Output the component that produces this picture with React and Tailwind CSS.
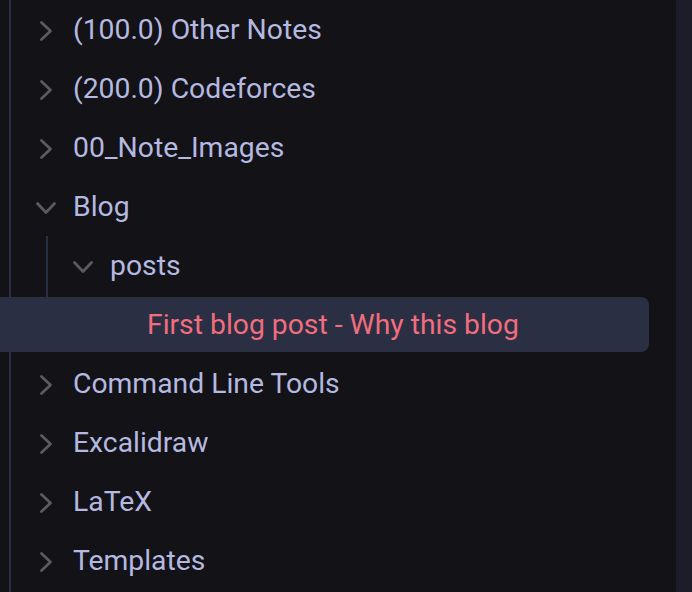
import React from "react";

const font = { fontFamily: "Roboto, 'Noto Sans', sans-serif" };

const ChevronRight = () => (
  <svg width="22" height="22" viewBox="0 0 22 22" fill="none" stroke="#5b5b5f" strokeWidth="2.8" strokeLinecap="round" strokeLinejoin="round">
    <path d="M6.5 2.5 L15.5 11 L6.5 19.5" />
  </svg>
);

const ChevronDown = () => (
  <svg width="22" height="22" viewBox="0 0 22 22" fill="none" stroke="#5b5b5f" strokeWidth="2.8" strokeLinecap="round" strokeLinejoin="round">
    <path d="M2.5 6.5 L11 15.5 L19.5 6.5" />
  </svg>
);

const Folder = ({ name, open }) => (
  <div className="flex h-[59px] items-center pl-[24px] pt-[2px]">
    <span className="flex w-[22px] shrink-0">{open ? <ChevronDown /> : <ChevronRight />}</span>
    <span className="ml-[16px] whitespace-nowrap text-[28.3px] leading-none text-[#b5b9e0]">{name}</span>
  </div>
);

export default function App() {
  return (
    <div className="flex h-[592px] w-[692px] overflow-hidden bg-[#121217]" style={font}>
      <div className="w-[676px] shrink-0 overflow-hidden">
        <div className="ml-[9px] h-full border-l-2 border-[#2b2f45]">
          <Folder name="(100.0) Other Notes" />
          <Folder name="(200.0) Codeforces" />
          <Folder name="00_Note_Images" />
          <Folder name="Blog" open />
          <div className="ml-[35px] border-l-2 border-[#2b2f45]">
            <Folder name="posts" open />
            <div className="ml-[-48px] h-[57px] pt-[2px]">
              <div className="flex h-[55px] w-[649px] items-center rounded-r-[8px] bg-[#2a2f44] pl-[147px] pt-[2px]">
                <span className="whitespace-nowrap text-[28.3px] leading-none text-[#f26d7d]">First blog post - Why this blog</span>
              </div>
            </div>
          </div>
          <div className="h-[2px]" />
          <Folder name="Command Line Tools" />
          <Folder name="Excalidraw" />
          <Folder name="LaTeX" />
          <Folder name="Templates" />
        </div>
      </div>
      <div className="flex-1 bg-[#1c1d28]" />
    </div>
  );
}
